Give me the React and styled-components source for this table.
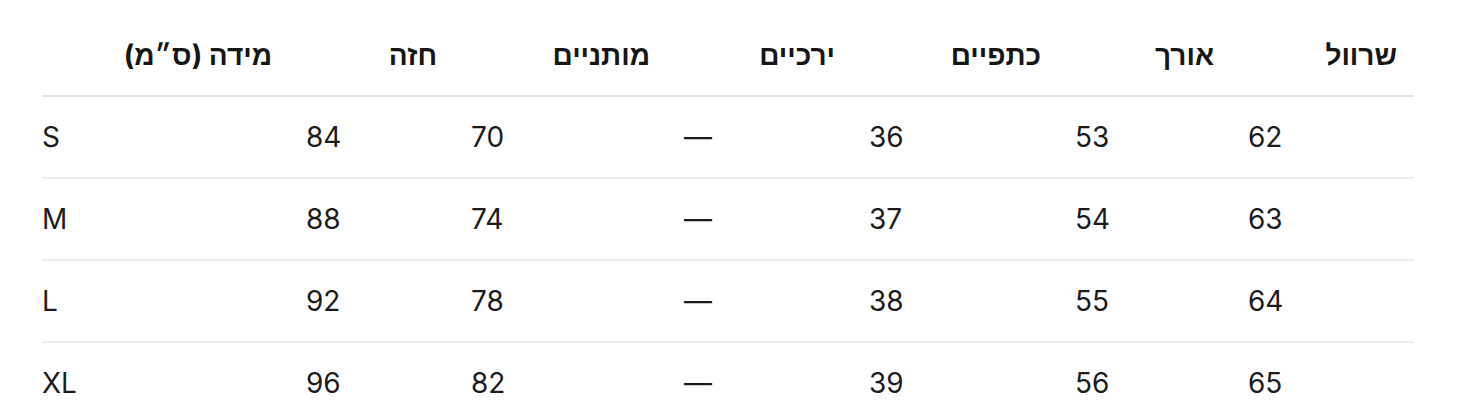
import styled, { createGlobalStyle } from "styled-components";

const GlobalStyle = createGlobalStyle`
  html, body {
    margin: 0;
    padding: 0;
    background: #ffffff;
  }
  body {
    font-family: "Inter", "Liberation Sans", sans-serif;
    color: #1c1c1c;
  }
`;

const Wrapper = styled.div`
  padding: 14px 47px 0 42px;
`;

const Table = styled.table`
  width: 100%;
  border-collapse: collapse;
  table-layout: fixed;
  direction: ltr;
`;

const Col = styled.col`
  width: ${(p) => p.$w}px;
`;

const HeadCell = styled.th`
  height: 82px;
  padding: 0 17px;
  text-align: right;
  vertical-align: middle;
  font-size: 28px;
  font-weight: 700;
  color: #161616;
  border-bottom: 2px solid #e4e4e4;
  box-sizing: border-box;

  &:first-child {
    padding-left: 0;
  }
`;

const Row = styled.tr`
  border-bottom: 2px solid #ececec;
`;

const Cell = styled.td`
  height: 82px;
  padding: 0 17px;
  text-align: left;
  vertical-align: middle;
  font-size: 28px;
  font-weight: 400;
  color: #1c1c1c;
  box-sizing: border-box;

  &:first-child {
    padding-left: 0;
  }
`;

const WIDTHS = [247, 165, 213, 185, 206, 173, 183];

const HEADERS = ["מידה (ס״מ)", "חזה", "מותניים", "ירכיים", "כתפיים", "אורך", "שרוול"];

const SIZES = [
  ["S", "84", "70", "—", "36", "53", "62"],
  ["M", "88", "74", "—", "37", "54", "63"],
  ["L", "92", "78", "—", "38", "55", "64"],
  ["XL", "96", "82", "—", "39", "56", "65"],
];

const App = () => {
  return (
    <>
      <GlobalStyle />
      <Wrapper>
        <Table>
          <colgroup>
            {WIDTHS.map((w, i) => (
              <Col key={i} $w={w} />
            ))}
          </colgroup>
          <thead>
            <tr>
              {HEADERS.map((h) => (
                <HeadCell key={h} dir="rtl">
                  {h}
                </HeadCell>
              ))}
            </tr>
          </thead>
          <tbody>
            {SIZES.map((row) => (
              <Row key={row[0]}>
                {row.map((value, i) => (
                  <Cell key={i}>{value}</Cell>
                ))}
              </Row>
            ))}
          </tbody>
        </Table>
      </Wrapper>
    </>
  );
};

export default App;
